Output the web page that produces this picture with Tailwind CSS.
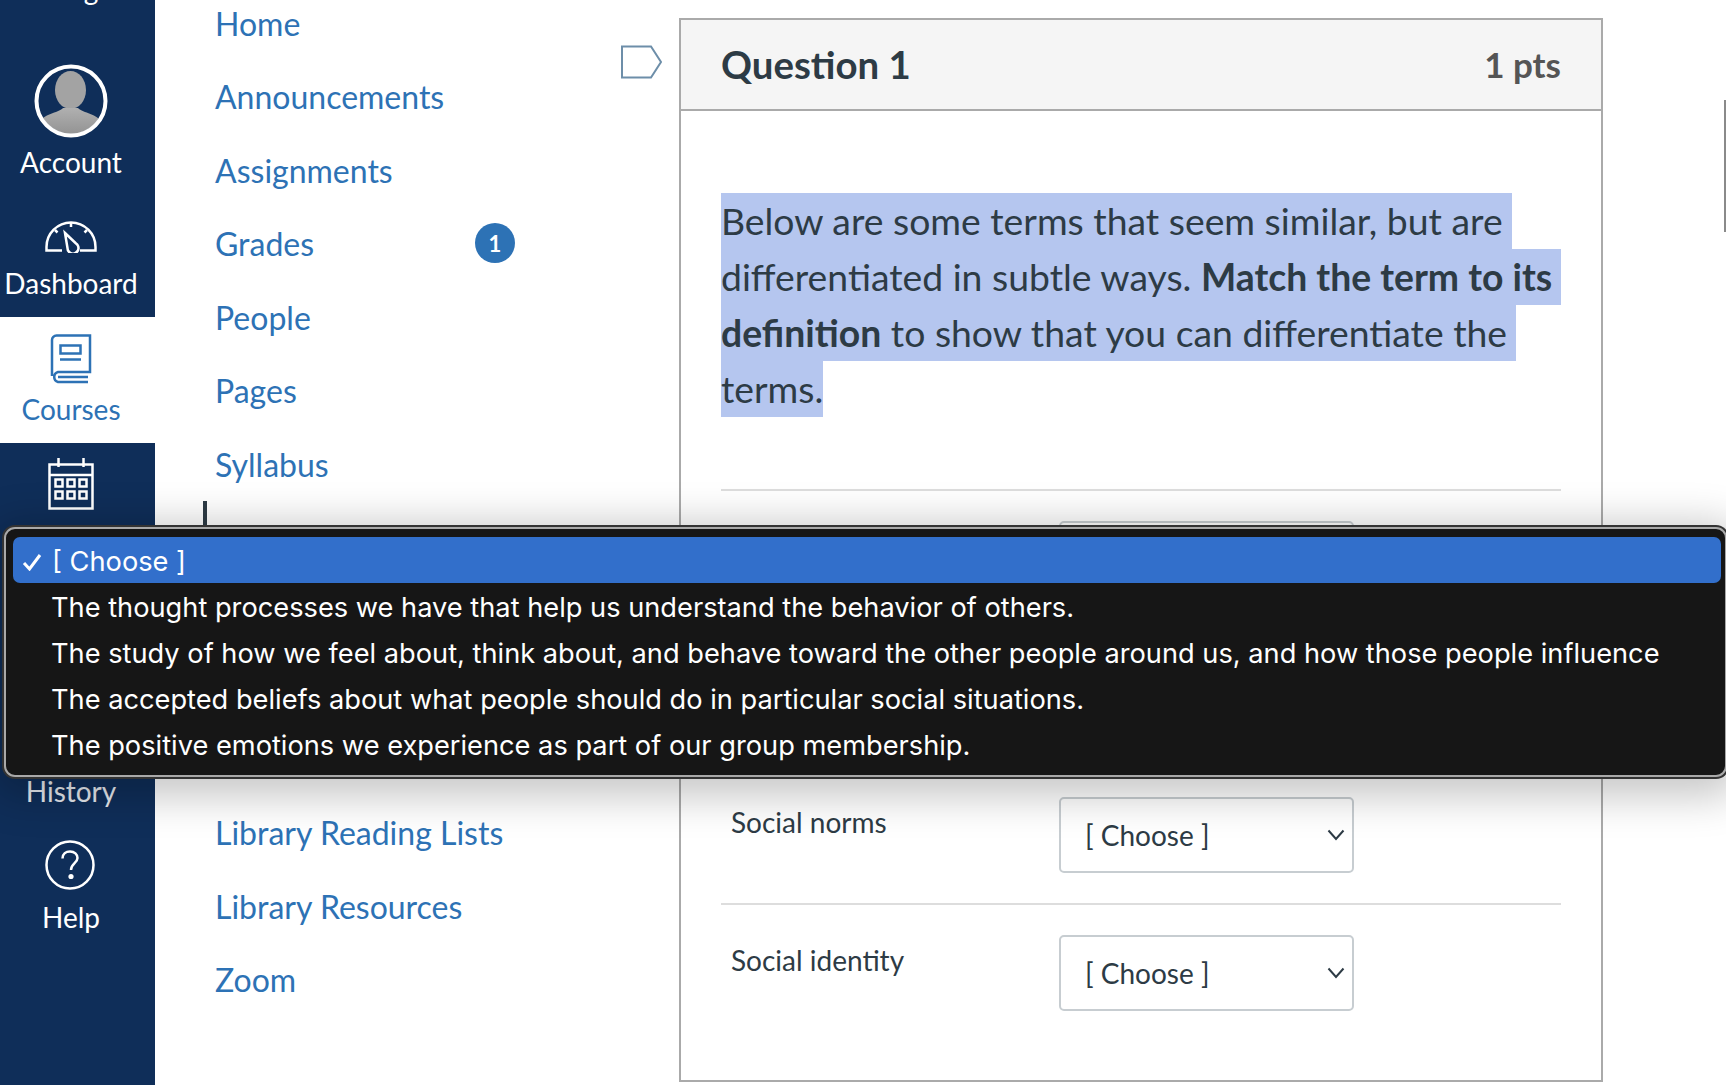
<!DOCTYPE html>
<html lang="en">
<head>
    <meta charset="UTF-8">
    <meta name="viewport" content="width=device-width, initial-scale=1.0">
    <title>Question 1</title>
    <script src="https://cdn.jsdelivr.net/npm/@tailwindcss/browser@4"></script>
</head>
<body class="bg-white">
<div class="relative flex h-[1085px] w-[1726px] overflow-hidden bg-white font-[Lato,sans-serif] text-[#2d3b45]">

    <!-- global nav -->
    <aside class="w-[155px] shrink-0 bg-[#0f2e59] text-[28px] leading-[32px] text-white">
        <div class="-mt-[27px] h-[91px] pr-[13px] text-center">Blog</div>
        <a class="flex h-[253px] flex-col items-center pr-[13px]" href="#">
            <svg width="74" height="74" viewBox="0 0 74 74" class="shrink-0">
                <defs>
                    <clipPath id="avatarClip"><circle cx="37" cy="37" r="33"></circle></clipPath>
                    <linearGradient id="avatarBody" x1="0" y1="0" x2="0" y2="1"><stop offset="0" stop-color="#b0b0b0"></stop><stop offset="1" stop-color="#8f8f8f"></stop></linearGradient>
                </defs>
                <g clip-path="url(#avatarClip)">
                    <ellipse cx="36.5" cy="26" rx="15.5" ry="19" fill="#a3a3a3"></ellipse>
                    <path d="M5 74V59C9 50 24 49 29 44H44C49 49 64 50 68 59V74Z" fill="url(#avatarBody)"></path>
                </g>
                <circle cx="37" cy="37" r="34.5" fill="none" stroke="#fff" stroke-width="4"></circle>
            </svg>
            <span class="mt-[8px]">Account</span>
            <svg width="54" height="36" viewBox="0 0 54 36" fill="none" stroke="#fff" stroke-width="2.5" class="mt-[39px] shrink-0">
                <path d="M18 33.5H2.5V30A24.5 24.5 0 0 1 51.5 30V33.5H36"></path>
                <path d="M27 6V10M11 13L13.5 15.5M43 13L40.5 15.5"></path>
                <path d="M21 16L32 26.5A5.5 5.5 0 1 1 23.5 31Z"></path>
            </svg>
            <span class="mt-[14px]">Dashboard</span>
        </a>
        <a class="flex h-[126px] flex-col items-center bg-white pr-[13px] pt-[17px] text-[#2d72b5]" href="#">
            <svg width="42" height="50" viewBox="0 0 42 50" fill="none" stroke="#2d72b5" stroke-width="2.5" class="shrink-0">
                <path d="M2 42V6A4.5 4.5 0 0 1 6.5 1.5H40V38H8A5.2 5.2 0 0 0 8 48H38M8 43H38"></path>
                <rect x="10.5" y="11.5" width="20" height="8"></rect>
                <path d="M10 25.5H31"></path>
            </svg>
            <span class="mt-[9px]">Courses</span>
        </a>
        <a class="flex h-[126px] flex-col items-center pr-[13px] pt-[15px]" href="#">
            <svg width="46" height="52" viewBox="0 0 46 52" fill="none" stroke="#fff" stroke-width="2.5" class="shrink-0">
                <path d="M1.5 6.5H44.5V50.5H1.5ZM1.5 17H44.5M10.5 0V9M35.5 0V9"></path>
                <path d="M7.5 21.5H14.5V28.5H7.5ZM19.5 21.5H26.5V28.5H19.5ZM31.5 21.5H38.5V28.5H31.5ZM7.5 33.5H14.5V40.5H7.5ZM19.5 33.5H26.5V40.5H19.5ZM31.5 33.5H38.5V40.5H31.5Z"></path>
            </svg>
            <span class="mt-[10px]">Calendar</span>
        </a>
        <a class="flex h-[126px] flex-col items-center pr-[13px]" href="#"></a>
        <a class="flex h-[128px] flex-col items-center justify-end pb-[16px] pr-[13px] text-[#e6e9ee]" href="#">History</a>
        <a class="flex flex-col items-center pr-[15px] pt-[17px]" href="#">
            <svg width="50" height="50" viewBox="0 0 50 50" fill="none" stroke="#fff" stroke-width="2.5" class="shrink-0">
                <circle cx="25" cy="25" r="23.5"></circle>
                <path d="M17.5 18.5C17.5 14 21 11.5 25 11.5C29.5 11.5 32.5 14.5 32.5 18C32.5 23 26 23.5 26 30"></path>
                <circle cx="26" cy="36.5" r="2.6" fill="#fff" stroke="none"></circle>
            </svg>
            <span class="ml-[2px] mt-[11px]">Help</span>
        </a>
    </aside>

    <!-- course nav -->
    <nav class="relative -mt-[13px] flex w-[466px] shrink-0 flex-col pl-[60px] text-[32px] text-[#2d72b5]">
        <a class="flex h-[73.5px] shrink-0 items-center" href="#">Home</a>
        <a class="flex h-[73.5px] shrink-0 items-center" href="#">Announcements</a>
        <a class="flex h-[73.5px] shrink-0 items-center" href="#">Assignments</a>
        <a class="flex h-[73.5px] shrink-0 items-center justify-between pr-[106px]" href="#">
            Grades
            <span class="-mt-[2px] flex h-[40px] w-[40px] items-center justify-center rounded-full bg-[#2d72b5] text-[22px] font-bold text-white">1</span>
        </a>
        <a class="flex h-[73.5px] shrink-0 items-center" href="#">People</a>
        <a class="flex h-[73.5px] shrink-0 items-center" href="#">Pages</a>
        <a class="flex h-[73.5px] shrink-0 items-center" href="#">Syllabus</a>
        <div class="h-[295px] shrink-0"></div>
        <a class="flex h-[73.5px] shrink-0 items-center" href="#">Library Reading Lists</a>
        <a class="flex h-[73.5px] shrink-0 items-center" href="#">Library Resources</a>
        <a class="flex h-[73.5px] shrink-0 items-center" href="#">Zoom</a>
        <div class="absolute left-[48px] top-[514px] h-[27px] w-[4px] bg-[#2d3b45]"></div>
    </nav>

    <!-- question mark flag -->
    <div class="w-[58px] shrink-0 pt-[45px]">
        <svg width="42" height="34" viewBox="0 0 42 34" fill="none" stroke="#6d8ea9" stroke-width="2">
            <path d="M1 1.5H30L40 17L30 32.5H1Z"></path>
        </svg>
    </div>

    <!-- question -->
    <section class="mt-[18px] flex h-[1064px] w-[924px] shrink-0 flex-col border-2 border-[#aaaaaa]">
        <header class="flex h-[91px] shrink-0 items-center justify-between border-b-2 border-[#aaaaaa] bg-[#f5f5f5] px-[40px]">
            <h2 class="text-[38.4px] font-bold">Question 1</h2>
            <span class="text-[35px] font-bold text-[#555555]">1 pts</span>
        </header>
        <div class="flex flex-1 flex-col px-[40px] pt-[82px]">
            <div class="whitespace-nowrap text-[37.35px] leading-[56px]">
                <div class="w-fit bg-[#b5c6ef] pr-[9px]">Below are some terms that seem similar, but are</div>
                <div class="w-fit bg-[#b5c6ef] pr-[9px]">differentiated in subtle ways. <strong>Match the term to its</strong></div>
                <div class="w-fit bg-[#b5c6ef] pr-[9px]"><strong>definition</strong> to show that you can differentiate the</div>
                <div class="w-fit bg-[#b5c6ef]">terms.</div>
            </div>
            <div class="mt-[72px] h-[138px] shrink-0 border-t-2 border-[#dddddd] pl-[10px] pt-[30px]">
                <div class="flex"><span class="w-[328px]"></span>
                    <div class="flex h-[76px] w-[295px] items-center justify-between rounded-[5px] border-2 border-[#c7cdd1] pl-[24px] pr-[7px] text-[28px]">[ Choose ]</div></div>
            </div>
            <div class="h-[138px] shrink-0 border-t-2 border-[#dddddd]"></div>
            <div class="h-[138px] shrink-0 border-t-2 border-[#dddddd] pl-[10px] pt-[30px]">
                <div class="flex"><span class="w-[328px] pt-[8px] text-[28px] leading-[34px]">Social norms</span>
                    <div class="flex h-[76px] w-[295px] items-center justify-between rounded-[5px] border-2 border-[#c7cdd1] pl-[24px] pr-[7px] text-[28px]">[ Choose ]
                        <svg width="18" height="12" viewBox="0 0 18 12" fill="none" stroke="#2d3b45" stroke-width="2"><path d="M1.5 1.5L9 10L16.5 1.5"></path></svg>
                    </div></div>
            </div>
            <div class="h-[138px] shrink-0 border-t-2 border-[#dddddd] pl-[10px] pt-[30px]">
                <div class="flex"><span class="w-[328px] pt-[8px] text-[28px] leading-[34px]">Social identity</span>
                    <div class="flex h-[76px] w-[295px] items-center justify-between rounded-[5px] border-2 border-[#c7cdd1] pl-[24px] pr-[7px] text-[28px]">[ Choose ]
                        <svg width="18" height="12" viewBox="0 0 18 12" fill="none" stroke="#2d3b45" stroke-width="2"><path d="M1.5 1.5L9 10L16.5 1.5"></path></svg>
                    </div></div>
            </div>
        </div>
    </section>

    <div class="absolute left-[1724px] top-[100px] h-[132px] w-[2px] bg-[#8a8a8a]"></div>

    <!-- open select menu -->
    <div class="absolute left-[4px] top-[527px] h-[250px] w-[1723px] rounded-[11px] border-2 border-[#a9a9a9] bg-[#161616] pl-[7px] pr-[4px] pt-[8px] font-[Inter,sans-serif] text-[27.22px] leading-[46px] text-white shadow-[0_0_0_2px_#333333,0_8px_40px_12px_rgba(0,0,0,0.22)]">
        <div class="flex h-[46px] items-center rounded-[7px] bg-[#326fcb] pl-[9px] pt-[4px]">
            <svg width="20" height="18" viewBox="0 0 20 18" fill="none" stroke="#fff" stroke-width="3" class="shrink-0"><path d="M2 10L7.5 16L18 2"></path></svg>
            <span class="ml-[10px]">[ Choose ]</span>
        </div>
        <div class="h-[46px] pl-[38px] pt-[2px]">The thought processes we have that help us understand the behavior of others.</div>
        <div class="h-[46px] pl-[38px] pt-[2px]">The study of how we feel about, think about, and behave toward the other people around us, and how those people influence</div>
        <div class="h-[46px] pl-[38px] pt-[2px]">The accepted beliefs about what people should do in particular social situations.</div>
        <div class="h-[46px] pl-[38px] pt-[2px]">The positive emotions we experience as part of our group membership.</div>
    </div>
</div>
</body>
</html>
